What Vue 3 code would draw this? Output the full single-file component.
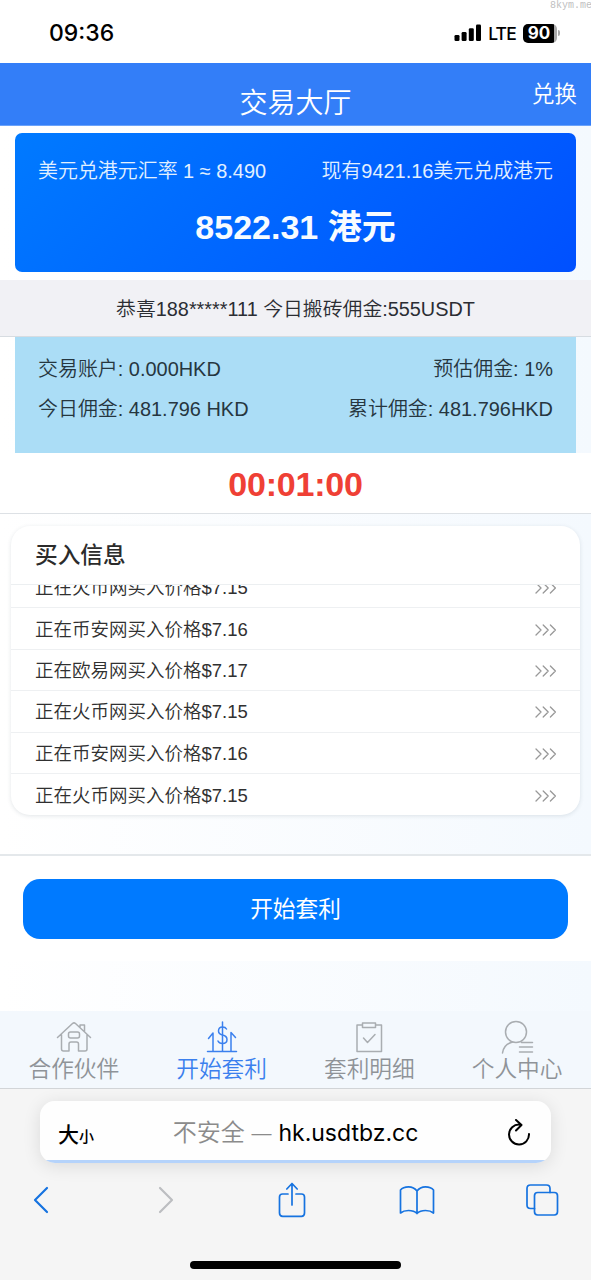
<script setup>
const prices = [
  { site: '火币网', price: '7.15' },
  { site: '币安网', price: '7.16' },
  { site: '欧易网', price: '7.17' },
  { site: '火币网', price: '7.15' },
  { site: '币安网', price: '7.16' },
  { site: '火币网', price: '7.15' },
]
</script>

<template>
  <div class="phone">
    <div class="status">
      <span class="clock">09:36</span>
      <div class="status-right">
        <svg class="signal" width="28" height="18" viewBox="0 0 28 18">
          <rect x="0.5" y="11" width="5" height="6" rx="1.3" />
          <rect x="7.6" y="8" width="5" height="9" rx="1.3" />
          <rect x="14.8" y="4.2" width="5" height="12.8" rx="1.3" />
          <rect x="22" y="0.5" width="5" height="16.5" rx="1.3" />
        </svg>
        <span class="lte">LTE</span>
        <div class="battery"><span>90</span></div>
        <i class="nub"></i>
      </div>
      <span class="watermark">8kym.me</span>
    </div>

    <header class="topbar">
      <h1>交易大厅</h1>
      <a class="exchange">兑换</a>
    </header>

    <section class="rate-wrap">
      <div class="rate-card">
        <div class="pair">
          <span>美元兑港元汇率 1 ≈ 8.490</span>
          <span>现有9421.16美元兑成港元</span>
        </div>
        <div class="amount">8522.31 港元</div>
      </div>
    </section>

    <div class="ticker">恭喜188*****111 今日搬砖佣金:555USDT</div>

    <section class="account">
      <div class="pair"><span>交易账户: 0.000HKD</span><span>预估佣金: 1%</span></div>
      <div class="pair"><span>今日佣金: 481.796 HKD</span><span>累计佣金: 481.796HKD</span></div>
    </section>

    <div class="timer">00:01:00</div>

    <section class="list-area">
      <div class="list-card">
        <h2>买入信息</h2>
        <div class="rows">
          <div class="track">
            <div v-for="(p, i) in prices" :key="i" class="row">
              <span>正在{{ p.site }}买入价格${{ p.price }}</span>
              <svg width="24" height="14" viewBox="0 0 24 14">
                <path d="M2 2 7 7 2 12M9.2 2 14.2 7 9.2 12M16.400 2 21.400 7 16.400 12" />
              </svg>
            </div>
          </div>
        </div>
      </div>
    </section>

    <div class="action"><button>开始套利</button></div>
    <div class="spacer"></div>

    <nav class="tabs">
      <a class="tab">
        <svg width="38" height="34" viewBox="0 0 38 34">
          <path d="M2.500 17.500 17.500 3.500Q19 2.200 20.500 3.500L35.500 17.500M6.500 14.500V29Q6.500 31 8.500 31H14V24Q14 22 16 22H21.500Q23.500 22 23.500 24V31H30Q32 31 32 29V14.500M25 7V5H29.500V11.500" />
          <rect x="13.500" y="12" width="11" height="6" rx="2" />
        </svg>
        <span>合作伙伴</span>
      </a>
      <a class="tab active">
        <svg width="38" height="34" viewBox="0 0 38 34">
          <path d="M4.500 31.500H33.500M10 31.500V13L5.500 18.500M19.500 2V31.500M28 31.500V12.500L32.500 17.500" />
          <path d="M23.500 9Q22.500 7 19.500 7Q15.500 7 15.500 11Q15.500 14 19.500 15Q24 16 24 19.500Q24 23.500 19.500 23.500Q16 23.500 15 21" />
        </svg>
        <span>开始套利</span>
      </a>
      <a class="tab">
        <svg width="38" height="34" viewBox="0 0 38 34">
          <path d="M12 5H7V31.500H31.500V5H26M12.500 3H25.500V7.500H12.500ZM13.500 18 17.500 22.500 25 14.500" />
        </svg>
        <span>套利明细</span>
      </a>
      <a class="tab">
        <svg width="38" height="34" viewBox="0 0 38 34">
          <circle cx="18" cy="12" r="10.500" />
          <path d="M14.500 22Q5.500 24.500 4.500 33M23.500 22.500H34.500M21.500 27H34.500M21.500 32H34.500" />
        </svg>
        <span>个人中心</span>
      </a>
    </nav>

    <footer class="safari">
      <div class="url">
        <span class="size">大<small>小</small></span>
        <span class="addr"><em>不安全 <b>—</b></em><strong>hk.usdtbz.cc</strong></span>
        <svg class="reload" width="24" height="28" viewBox="0 0 24 28">
          <path d="M12.500 5.500A10 10 0 1 0 22 15M9 1 14.500 6 9 11.500" />
        </svg>
      </div>
      <div class="tools">
        <svg height="28" viewBox="0 0 36 28"><path d="M24 2 12 14 24 26" stroke-width="2.200" /></svg>
        <svg class="off" height="28" viewBox="0 0 36 28"><path d="M12 2 24 14 12 26" stroke-width="2.200" /></svg>
        <svg height="36" viewBox="0 0 36 36">
          <path d="M14 12H8.500Q5.500 12 5.500 15V31Q5.500 34.300 8.700 34.300H27.500Q30.500 34.300 30.500 31V15Q30.500 12 27.500 12H22M18 23V2M12.800 7 18 1.500 23.200 7" />
        </svg>
        <svg height="30" viewBox="0 0 36 30">
          <path d="M18 6Q15 1.800 9.500 1.800Q4 1.800 1.500 5V28Q4.500 25.500 9.500 25.500Q15 25.500 18 28.500Q21 25.500 26.500 25.500Q31.500 25.500 34.500 28V5Q32 1.800 26.500 1.800Q21 1.800 18 6V28.500" />
        </svg>
        <svg height="34" viewBox="0 0 36 34">
          <rect x="10.500" y="9.500" width="23" height="22.500" rx="3.200" />
          <path d="M10.500 25.500H6.500Q3 25.500 3 22V5.500Q3 2 6.500 2H22.500Q26 2 26 5.500V9.500" />
        </svg>
      </div>
      <div class="home"></div>
    </footer>
  </div>
</template>

<style>
body {
  margin: 0;
}
</style>

<style scoped>
* {
  box-sizing: border-box;
}
.phone {
  width: 591px;
  height: 1280px;
  overflow: hidden;
  display: flex;
  flex-direction: column;
  background: linear-gradient(90deg, #ffffff 0%, #f4f9fe 100%);
  font-family: "Liberation Sans", "Noto Sans CJK SC", sans-serif;
  font-weight: 350;
  color: #2b2d33;
}
.phone > * {
  flex: none;
}
svg {
  display: block;
  fill: none;
  stroke: currentColor;
  stroke-linecap: round;
  stroke-linejoin: round;
}
.status {
  position: relative;
  height: 63px;
  background: #fff;
  display: flex;
  justify-content: space-between;
  align-items: flex-start;
  padding: 18px 31px 0 49px;
  color: #000;
  font-family: Inter, sans-serif;
}
.clock {
  font-size: 23px;
  font-weight: 500;
  line-height: 30px;
}
.status-right {
  display: flex;
  align-items: center;
  height: 30px;
}
.signal {
  fill: #000;
  stroke: none;
}
.lte {
  font-size: 17.500px;
  font-weight: 450;
  letter-spacing: -0.8px;
  margin-left: 6px;
}
.battery {
  width: 34px;
  height: 19px;
  margin-left: 7px;
  border-radius: 5px;
  background: linear-gradient(90deg, #000 91%, #aaa 91%);
  color: #fff;
  font-size: 17px;
  font-weight: 700;
  line-height: 19px;
  text-align: center;
  padding-right: 2px;
}
.nub {
  width: 2px;
  height: 6px;
  margin-left: 1px;
  border-radius: 0 2px 2px 0;
  background: #aaa;
}
.watermark {
  position: absolute;
  left: 550px;
  top: 0;
  width: 41px;
  overflow: hidden;
  font: 10px/12px "Liberation Mono", monospace;
  color: #c0c0c0;
}
.topbar {
  position: relative;
  height: 63px;
  background: #337ef8;
  border-bottom: 1px solid #6aa2fa;
  color: #fff;
}
.topbar h1 {
  margin: 0;
  padding-top: 21px;
  text-align: center;
  font-size: 28px;
  line-height: 40px;
  font-weight: 350;
}
.exchange {
  position: absolute;
  right: 14px;
  top: 15px;
  font-size: 22.700px;
  line-height: 32px;
}
.rate-wrap {
  padding: 7px 15px 8px;
}
.rate-card {
  height: 139px;
  border-radius: 7px;
  background: linear-gradient(135deg, #007aff 0%, #0050ff 100%);
  color: #fff;
  padding: 23px 23px 0;
}
.pair {
  display: flex;
  justify-content: space-between;
  font-size: 19.950px;
  line-height: 30px;
}
.rate-card .pair {
  color: #e2f0ff;
}
.amount {
  margin-top: 16px;
  text-align: center;
  font-size: 34px;
  line-height: 50px;
  font-weight: 700;
  color: #f7fbff;
}
.ticker {
  height: 57px;
  background: #f1f1f5;
  border-bottom: 1px solid #d7dce1;
  text-align: center;
  font-size: 19.850px;
  line-height: 58px;
}
.account {
  height: 116px;
  margin: 0 15px;
  padding: 17px 23px 0;
  background: #abddf6;
  color: #26363f;
}
.account .pair + .pair {
  margin-top: 10px;
}
.timer {
  height: 61px;
  background: #fff;
  border-bottom: 1px solid #dde1e5;
  text-align: center;
  font-size: 34px;
  font-weight: 700;
  line-height: 62px;
  letter-spacing: -0.2px;
  color: #ef4035;
}
.list-area {
  height: 340px;
  padding: 12px 11px 0;
}
.list-card {
  height: 289px;
  border-radius: 19px;
  background: #fff;
  box-shadow: 0 1px 4px rgba(40, 60, 80, 0.13);
  overflow: hidden;
}
.list-card h2 {
  margin: 0;
  height: 59px;
  padding-left: 24px;
  font-size: 22.700px;
  font-weight: 500;
  line-height: 58px;
  color: #2b2b2b;
  border-bottom: 1px solid #eceff1;
}
.rows {
  height: 230px;
  overflow: hidden;
}
.track {
  margin-top: -18px;
}
.row {
  height: 41.400px;
  padding: 2px 22px 0 24px;
  display: flex;
  justify-content: space-between;
  align-items: center;
  border-bottom: 1px solid #eef0f2;
  font-size: 18.500px;
  line-height: 38px;
  color: #303030;
}
.row svg {
  color: #999;
  stroke-width: 1.300;
}
.row:last-child {
  border-bottom: 0;
}
.action {
  height: 107px;
  background: #fff;
  border-top: 2px solid #e4e8eb;
  padding: 23px 23px 0;
}
.action button {
  display: block;
  width: 100%;
  height: 60px;
  padding: 0;
  border: 0;
  border-radius: 17px;
  background: #007aff;
  color: #fff;
  font: 400 22.700px/60px "Liberation Sans", "Noto Sans CJK SC", sans-serif;
}
.spacer {
  height: 50px;
}
.tabs {
  height: 77px;
  background: #f3f8fd;
  display: grid;
  grid-template-columns: repeat(4, 1fr);
  color: #8f9398;
}
.tab {
  display: flex;
  flex-direction: column;
  align-items: center;
  padding-top: 9px;
}
.tab svg {
  color: #a9adb1;
  stroke-width: 1.500;
}
.tab span {
  font-size: 22.700px;
  line-height: 31px;
}
.tab.active,
.tab.active svg {
  color: #3b80ee;
}
.safari {
  height: 192px;
  background: #f5f5f5;
  border-top: 1px solid #d2d5d8;
  padding: 12px 0 0;
}
.url {
  height: 62px;
  margin: 0 40px;
  border-radius: 15px;
  background: linear-gradient(#fefefe 0 59px, #b5d3fb 59px);
  box-shadow: 0 3px 18px rgba(0, 0, 0, 0.11);
  display: flex;
  align-items: center;
  justify-content: space-between;
  padding: 1px 20px 0 18px;
  color: #000;
}
.size {
  width: 60px;
  font-size: 21px;
  font-weight: 500;
}
.size small {
  font-size: 15px;
}
.addr {
  display: flex;
  font-family: Inter, "Noto Sans CJK SC", sans-serif;
  font-size: 24px;
  line-height: 40px;
  padding: 1px 0 0 2px;
}
.addr em {
  font-style: normal;
  color: #8b8b8b;
  margin-right: 7px;
}
.addr b {
  display: inline-block;
  font-weight: 350;
  font-size: 20px;
}
.addr strong {
  font-weight: 400;
  font-size: 23px;
}
.reload {
  stroke-width: 2;
  margin-left: 36px;
}
.tools {
  display: flex;
  align-items: center;
  justify-content: space-between;
  height: 36px;
  margin: 19px 31px 0 23px;
  color: #1673e0;
}
.tools svg {
  width: 36px;
  stroke-width: 1.700;
}
.tools .off {
  color: #bcbec1;
}
.home {
  width: 211px;
  height: 8px;
  margin: 43px auto 0;
  border-radius: 4px;
  background: #000;
}
</style>
